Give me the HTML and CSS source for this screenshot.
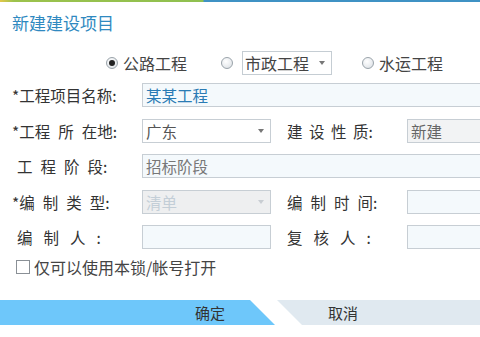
FILE: index.html
```html
<!DOCTYPE html>
<html lang="zh-CN">
<head>
  <meta charset="UTF-8">
  <title>新建建设项目</title>
  <link rel="stylesheet" href="styles.css">
</head>
<body>
  <div class="topline"></div>
  <h1 class="title">新建建设项目</h1>

  <div class="types">
    <span class="radio checked"></span><span class="type-text">公路工程</span>
    <span class="radio second"></span>
    <div class="select small"><span>市政工程</span><i class="arrow"></i></div>
    <span class="radio third"></span><span class="type-text">水运工程</span>
  </div>

  <div class="form">
    <label>*工程项目名称:</label>
    <div class="field wide name">某某工程</div>

    <label>*工程 所 在地:</label>
    <div class="field select"><span>广东</span><i class="arrow"></i></div>
    <label class="right narrow">建 设 性 质:</label>
    <div class="field edge grey">新建</div>

    <label class="indent">工 程 阶 段:</label>
    <div class="field wide muted">招标阶段</div>

    <label>*编 制 类 型:</label>
    <div class="field select disabled"><span>清单</span><i class="arrow"></i></div>
    <label class="right">编 制 时 间:</label>
    <div class="field edge"></div>

    <label class="indent loose">编 制 人 :</label>
    <div class="field"></div>
    <label class="right loose">复 核 人 :</label>
    <div class="field edge"></div>
  </div>

  <div class="check-row">
    <span class="checkbox"></span>仅可以使用本锁/帐号打开
  </div>

  <div class="buttons">
    <div class="btn ok">确定</div>
    <div class="btn cancel">取消</div>
  </div>
</body>
</html>
```

FILE: styles.css
```css
html, body {
  margin: 0;
  padding: 0;
  width: 480px;
  height: 337px;
  overflow: hidden;
  background: #fff;
  font-family: "Noto Sans CJK SC", "Noto Sans", sans-serif;
  color: #333;
}

.topline {
  height: 2px;
  background: linear-gradient(to right, #e3c84a 0, #9cc24c 14px, #8fc050 203px, #3f92c4 204px, #3f92c4 100%);
}

.title {
  margin: 0;
  padding: 10px 0 0 12px;
  height: 26px;
  font-size: 17px;
  line-height: 22px;
  font-weight: normal;
  color: #2f89c0;
}

.types {
  display: flex;
  align-items: center;
  margin-top: 13px;
  padding-left: 106px;
  height: 24px;
  font-size: 16px;
  line-height: 22px;
  color: #444;
}

.radio {
  width: 10px;
  height: 10px;
  border: 1px solid #9aa3aa;
  border-radius: 50%;
  background: radial-gradient(circle at 40% 35%, #fff 0, #e8ebee 60%, #d4d9de 100%);
  position: relative;
  flex: none;
}

.radio.checked::after {
  content: "";
  position: absolute;
  left: 2px;
  top: 2px;
  width: 6px;
  height: 6px;
  border-radius: 50%;
  background: #222;
}

.type-text {
  margin-left: 5px;
}

.radio.second {
  margin-left: 34px;
}

.radio.third {
  margin-left: 30px;
}

.select {
  display: flex;
  align-items: center;
  justify-content: space-between;
  box-sizing: border-box;
  padding: 0 6px 0 2px;
}

.select.small {
  width: 90px;
  height: 24px;
  margin-left: 9px;
  border: 1px solid #c5cdd3;
  background: #fff;
}

.arrow {
  width: 0;
  height: 0;
  border-left: 3.5px solid transparent;
  border-right: 3.5px solid transparent;
  border-top: 4px solid #777;
}

.form {
  display: grid;
  grid-template-columns: 130px 129px 136px 73px;
  grid-auto-rows: 24px;
  row-gap: 11.5px;
  margin-top: 8px;
  padding-left: 12px;
  font-size: 15.5px;
  line-height: 24px;
}

.form label {
  color: #333;
  white-space: pre;
  word-spacing: 4.5px;
}

.form label.right {
  padding-left: 16px;
}

.form label.indent {
  padding-left: 5px;
}

.form label.narrow {
  word-spacing: 3px;
}

.form label.loose {
  word-spacing: 7.5px;
}

.field {
  box-sizing: border-box;
  height: 24px;
  border: 1px solid #c7ced4;
  background: #f4f9fc;
  padding: 0 3px;
  font-size: 15.5px;
  line-height: 22px;
  color: #555;
  overflow: hidden;
  white-space: nowrap;
}

.field.wide {
  grid-column: 2 / 5;
  border-right: none;
}

.field.edge {
  border-right: none;
}

.field.name {
  color: #2a7bb4;
}

.field.muted {
  color: #777;
}

.field.grey {
  background: #f2f3f4;
  color: #666;
}

.field.select {
  padding: 0 6px 0 3px;
  background: #fff;
}

.field.disabled {
  background: #eeeff0;
  color: #c3ced7;
}

.field.disabled .arrow {
  border-top-color: #c8cdd2;
}

.check-row {
  display: flex;
  align-items: center;
  margin-top: 7px;
  padding-left: 16px;
  height: 22px;
  font-size: 16px;
  line-height: 22px;
  color: #444;
}

.checkbox {
  width: 12px;
  height: 12px;
  border: 1px solid #8a9096;
  background: #fff;
  margin-right: 4px;
  flex: none;
}

.buttons {
  display: flex;
  margin-top: 22px;
  height: 25px;
}

.btn {
  height: 25px;
  font-size: 15px;
  line-height: 25px;
  color: #333;
}

.btn.ok {
  width: 275px;
  padding-left: 195px;
  box-sizing: border-box;
  background: #6ec7fa;
  clip-path: polygon(0 0, 250px 0, 275px 100%, 0 100%);
}

.btn.cancel {
  margin-left: 2px;
  width: 203px;
  padding-left: 51px;
  box-sizing: border-box;
  background: #e0e9f0;
  clip-path: polygon(0 0, 100% 0, 100% 100%, 25px 100%);
}
```
